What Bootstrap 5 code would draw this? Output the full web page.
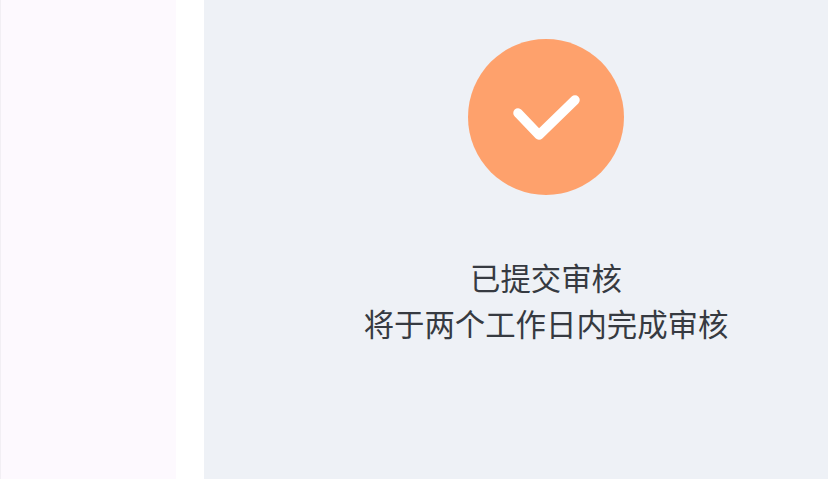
<!DOCTYPE html>
<html lang="zh">
<head>
<meta charset="utf-8">
<link rel="stylesheet" href="https://cdn.jsdelivr.net/npm/bootstrap@5.3.0/dist/css/bootstrap.min.css">
<style>
html, body { height: 100%; overflow: hidden; background: #fff; }
.shell { height: 479px; }
.side-rail { width: 176px; background: #fdf9fe; border-left: 1px solid #f2eff4; }
.side-gap { width: 28px; background: #fff; }
.main-pane { background: #eef1f6; padding-top: 39px; padding-left: 60px; min-width: 0; }
.done-circle { width: 156px; height: 156px; background: #fea16c; }
.done-text { margin-top: 59px; font: 400 30.4px/46px "Noto Sans CJK SC", "Liberation Sans", sans-serif; color: #363a41; white-space: nowrap; }
</style>
</head>
<body>
<div class="shell d-flex">
  <div class="side-rail flex-shrink-0"></div>
  <div class="side-gap flex-shrink-0"></div>
  <div class="main-pane flex-grow-1 d-flex flex-column align-items-center">
    <div class="done-circle rounded-circle">
      <svg width="156" height="156" viewBox="0 0 156 156" fill="none" stroke="#fff" stroke-width="9.5" stroke-linecap="round" stroke-linejoin="round"><path d="M50 74 L71 96 L107 61"/></svg>
    </div>
    <div class="done-text text-center">已提交审核<br>将于两个工作日内完成审核</div>
  </div>
</div>
<script src="https://cdn.jsdelivr.net/npm/bootstrap@5.3.0/dist/js/bootstrap.bundle.min.js"></script>
</body>
</html>
